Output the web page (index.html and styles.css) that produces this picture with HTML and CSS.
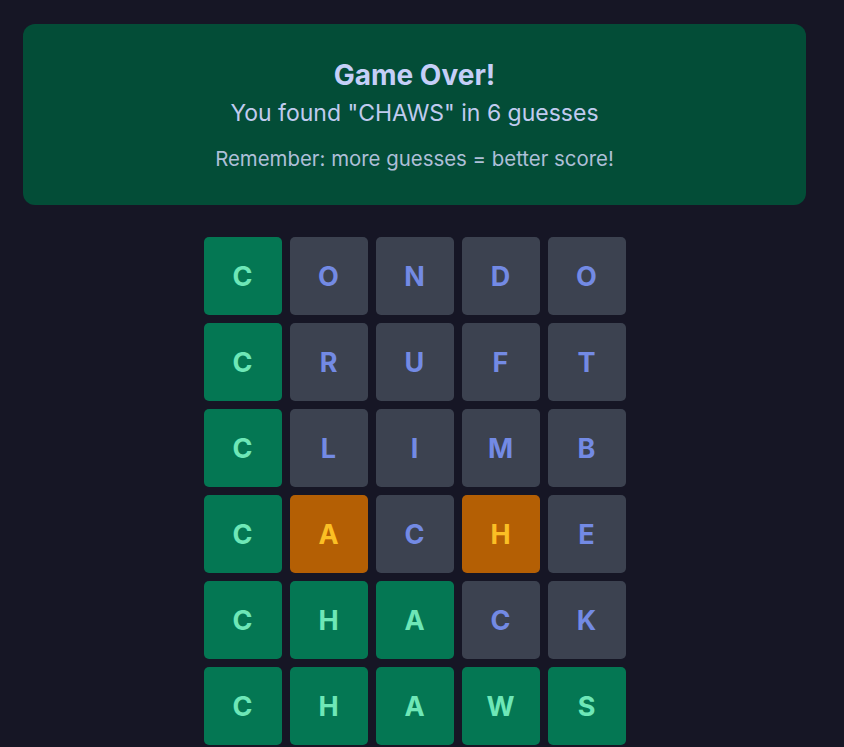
FILE: index.html
```html
<!DOCTYPE html>
<html lang="en">
<head>
<meta charset="utf-8">
<title>Game Over</title>
<link rel="stylesheet" href="styles.css">
</head>
<body>
<main class="page">
  <section class="banner">
    <h1 class="banner-title">Game Over!</h1>
    <p class="banner-sub">You found "CHAWS" in 6 guesses</p>
    <p class="banner-note">Remember: more guesses = better score!</p>
  </section>
  <div class="board">
    <div class="row"><div class="tile correct">C</div><div class="tile absent">O</div><div class="tile absent">N</div><div class="tile absent">D</div><div class="tile absent">O</div></div>
    <div class="row"><div class="tile correct">C</div><div class="tile absent">R</div><div class="tile absent">U</div><div class="tile absent">F</div><div class="tile absent">T</div></div>
    <div class="row"><div class="tile correct">C</div><div class="tile absent">L</div><div class="tile absent">I</div><div class="tile absent">M</div><div class="tile absent">B</div></div>
    <div class="row"><div class="tile correct">C</div><div class="tile present">A</div><div class="tile absent">C</div><div class="tile present">H</div><div class="tile absent">E</div></div>
    <div class="row"><div class="tile correct">C</div><div class="tile correct">H</div><div class="tile correct">A</div><div class="tile absent">C</div><div class="tile absent">K</div></div>
    <div class="row"><div class="tile correct">C</div><div class="tile correct">H</div><div class="tile correct">A</div><div class="tile correct">W</div><div class="tile correct">S</div></div>
  </div>
</main>
</body>
</html>
```

FILE: styles.css
```css
* { box-sizing: border-box; }
html, body {
  margin: 0;
  padding: 0;
  background: #161625;
  height: 100%;
  overflow: hidden;
}
body {
  font-family: Inter, Roboto, "Liberation Sans", sans-serif;
}
.page {
  width: 783px;
  margin-left: 23px;
  padding-top: 24px;
  display: flex;
  flex-direction: column;
  align-items: center;
  gap: 32px;
}
.banner {
  width: 100%;
  height: 181px;
  background: #034d37;
  border-radius: 12px;
  display: flex;
  flex-direction: column;
  align-items: center;
  padding-top: 33px;
  text-align: center;
}
.banner-title {
  margin: 0;
  font-size: 28px;
  line-height: 36px;
  font-weight: 700;
  color: #c5cff8;
}
.banner-sub {
  margin: 4px 0 0;
  font-size: 23px;
  line-height: 32px;
  color: #c0cbef;
}
.banner-note {
  margin: 16px 0 0;
  font-size: 20.4px;
  line-height: 28px;
  color: #aebfd8;
}
.board {
  display: flex;
  flex-direction: column;
  gap: 8px;
}
.row {
  display: flex;
  gap: 8px;
}
.tile {
  width: 78px;
  height: 78px;
  border-radius: 5px;
  display: flex;
  align-items: center;
  justify-content: center;
  font-size: 27px;
  font-weight: 700;
}
.correct { background: #047753; color: #6ee7b7; }
.absent { background: #3c4250; color: #738ae4; }
.present { background: #b45f04; color: #fbbf24; }
```
